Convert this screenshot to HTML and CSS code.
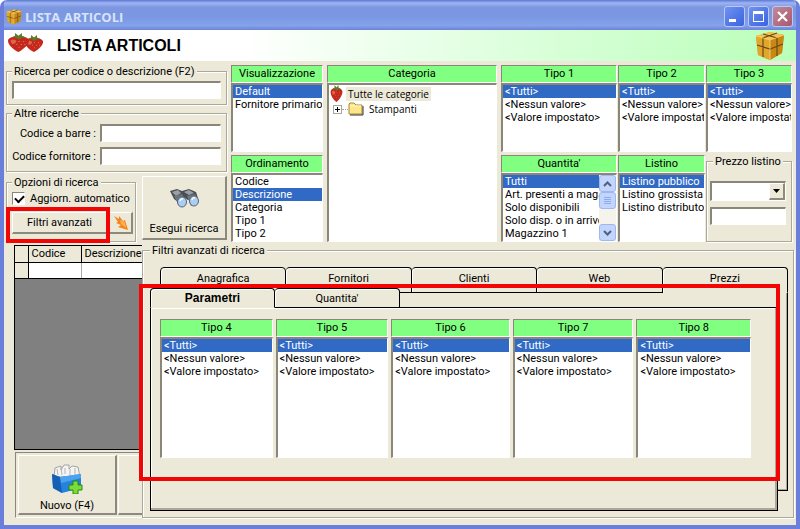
FILE: index.html
```html
<!DOCTYPE html>
<html lang="it">
<head>
    <meta charset="UTF-8">
    <meta name="viewport" content="width=device-width, initial-scale=1">
    <title>Lista articoli</title>
    <link rel="stylesheet" href="styles.css">
</head>
<body>
    <!-- shared icons -->
    <svg class="sprite" width="0" height="0" aria-hidden="true">
        <symbol id="box" viewBox="0 0 30 30">
            <path d="M1 5L15 1L29 4L27 22L15 29L3 24Z" fill="#d9981c"/>
            <path d="M1 5L15 1L29 4L15 9Z" fill="#f1c552"/>
            <path d="M1 5L15 9V29L3 24Z" fill="#e3a62c"/>
            <path d="M15 9L29 4L27 22L15 29Z" fill="#c98714"/>
            <path d="M8 3L22 7V25M22 2L8 7V26M2 14L15 18L28 13" fill="none" stroke="#6b4a12" stroke-width="1.2"/>
            <path d="M1 5L15 9L29 4M15 9V29" fill="none" stroke="#f7d476" stroke-width=".8"/>
        </symbol>
        <symbol id="berry" viewBox="0 0 20 20" preserveAspectRatio="none">
            <path d="M1 7C4 2 16 2 19 7C20 12 13 18 10 20C6 18 0 12 1 7Z" fill="#c5281c"/>
            <path d="M3 8C5 6 8 7 8 9C7 12 5 12 4 11Z" fill="#e2604c"/>
            <path d="M6 9h1M10 9h1M14 9h1M8 12h1M12 12h1M10 15h1M15 12h1" stroke="#e0764f" stroke-width="1"/>
            <path d="M4 5L7 3L7 0L10 3L13 0L13 3L17 5L13 5L10 7L8 5Z" fill="#5f7a28"/>
        </symbol>
    </svg>

    <div class="window">
        <div class="titlebar">
            <svg class="title-icon"><use href="#box"/></svg>
            <span class="title-text">LISTA ARTICOLI</span>
            <button class="win-btn" aria-label="Riduci"><svg viewBox="0 0 19 19"><path d="M4 12h7v3H4z" fill="#fff"/></svg></button>
            <button class="win-btn" aria-label="Ingrandisci"><svg viewBox="0 0 19 19"><path d="M4 4h11v11H4zM5 7v7h9V7z" fill="#fff" fill-rule="evenodd"/></svg></button>
            <button class="win-btn close" aria-label="Chiudi"><svg viewBox="0 0 19 19"><path d="M5 5l9 9M14 5l-9 9" stroke="#fff" stroke-width="2.2"/></svg></button>
        </div>

        <div class="banner">
            <svg class="berries" viewBox="0 0 38 20">
                <use href="#berry" x="17" y="2" width="20" height="17"/>
                <use href="#berry" x="0" y="0" width="23" height="19"/>
            </svg>
            <h1>LISTA ARTICOLI</h1>
            <svg class="banner-box"><use href="#box"/></svg>
        </div>

        <div class="content">
            <div class="top">
                <div class="search">
                    <fieldset class="group code">
                        <legend><label for="q">Ricerca per codice o descrizione (F2)</label></legend>
                        <input class="field" id="q" type="text">
                    </fieldset>
                    <fieldset class="group other">
                        <legend>Altre ricerche</legend>
                        <div class="other-fields">
                            <label for="barcode">Codice a barre :</label>
                            <input class="field" id="barcode" type="text">
                            <label for="supplier">Codice fornitore :</label>
                            <input class="field" id="supplier" type="text">
                        </div>
                    </fieldset>
                    <div class="actions">
                        <fieldset class="group options">
                            <legend>Opzioni di ricerca</legend>
                            <label class="check"><input type="checkbox" checked>Aggiorn. automatico</label>
                            <div class="option-buttons">
                                <button class="btn filters">Filtri avanzati</button>
                                <button class="btn arrow" aria-label="Applica">
                                    <svg width="16" height="16" viewBox="0 0 16 16"><path d="M1 1L6 4L6 1L10 6L12 5L15 15L5 12L8 10L3 8L5 7Z" fill="#f58220"/><path d="M7 5L12 7L13 13L8 9Z" fill="#ffb04a"/></svg>
                                </button>
                                <span class="mark mark-button"></span>
                            </div>
                        </fieldset>
                        <button class="btn run">
                            <svg width="31" height="21" viewBox="0 0 31 21">
                                <path d="M1 3L8 1L13 3L20 1L27 4L29 10L19 12L14 9L9 14L5 11Z" fill="#4b4f55"/>
                                <path d="M3 4L9 2L12 5L7 8ZM15 4L20 2L25 5L20 7Z" fill="#9aa0a8"/>
                                <path d="M5 8L13 6L17 13L10 18ZM18 8L26 6L29 14L22 18Z" fill="#6e747c"/>
                                <ellipse cx="13" cy="14" rx="4.500" ry="5" fill="#a9cdf5" stroke="#5a6470"/>
                                <ellipse cx="25" cy="13" rx="4.500" ry="5" fill="#a9cdf5" stroke="#5a6470"/>
                                <path d="M11 13q1-3 3-2M23 12q1-3 3-2" stroke="#fff" stroke-width="1.500" fill="none"/>
                            </svg>
                            <span>Esegui ricerca</span>
                        </button>
                    </div>
                </div>

                <div class="stack">
                    <div class="list">
                        <label for="view">Visualizzazione</label>
                        <select id="view" size="5"><option selected>Default</option><option>Fornitore primario</option></select>
                    </div>
                    <div class="list">
                        <label for="sort">Ordinamento</label>
                        <select id="sort" size="5"><option>Codice</option><option selected>Descrizione</option><option>Categoria</option><option>Tipo 1</option><option>Tipo 2</option></select>
                    </div>
                </div>

                <div class="list">
                    <span class="list-title">Categoria</span>
                    <ul class="tree">
                        <li class="root"><svg width="13" height="17"><use href="#berry"/></svg><span>Tutte le categorie</span></li>
                        <li class="child">
                            <button class="expand" aria-label="Espandi"><svg width="7" height="7" viewBox="0 0 7 7"><path d="M1 3.500h5M3.500 1v5" stroke="#000"/></svg></button><i></i>
                            <svg width="16" height="14" viewBox="0 0 16 14"><path d="M1 12V2L2 1H6L8 3H14V12Z" fill="#ffe68a" stroke="#a88a2c"/><path d="M2 13H15V4" fill="none" stroke="#333"/><path d="M2 4H13" stroke="#fff8d0"/></svg>
                            <span>Stampanti</span>
                        </li>
                    </ul>
                </div>

                <div class="types">
                    <div class="list">
                        <label for="t1">Tipo 1</label>
                        <select id="t1" size="5"><option selected>&lt;Tutti&gt;</option><option>&lt;Nessun valore&gt;</option><option>&lt;Valore impostato&gt;</option></select>
                    </div>
                    <div class="list">
                        <label for="t2">Tipo 2</label>
                        <select id="t2" size="5"><option selected>&lt;Tutti&gt;</option><option>&lt;Nessun valore&gt;</option><option>&lt;Valore impostato&gt;</option></select>
                    </div>
                    <div class="list">
                        <label for="t3">Tipo 3</label>
                        <select id="t3" size="5"><option selected>&lt;Tutti&gt;</option><option>&lt;Nessun valore&gt;</option><option>&lt;Valore impostato&gt;</option></select>
                    </div>
                    <div class="list">
                        <label for="qty">Quantita'</label>
                        <div class="scrolling">
                            <select id="qty" size="5"><option selected>Tutti</option><option>Art. presenti a magazzino</option><option>Solo disponibili</option><option>Solo disp. o in arrivo</option><option>Magazzino 1</option></select>
                            <div class="scrollbar">
                                <button aria-label="Su"><svg width="9" height="6" viewBox="0 0 9 6"><path d="M1 5l3.500-3.500L8 5" fill="none" stroke="#4d6185" stroke-width="2"/></svg></button>
                                <span class="thumb"><svg width="7" height="8" viewBox="0 0 7 8"><path d="M0 .5h7M0 2.500h7M0 4.500h7M0 6.500h7" stroke="#8caaf0"/></svg></span>
                                <button class="down" aria-label="Giù"><svg width="9" height="6" viewBox="0 0 9 6"><path d="M1 1l3.500 3.500L8 1" fill="none" stroke="#4d6185" stroke-width="2"/></svg></button>
                            </div>
                        </div>
                    </div>
                    <div class="list">
                        <label for="pl">Listino</label>
                        <select id="pl" size="5"><option selected>Listino pubblico</option><option>Listino grossista</option><option>Listino distributore</option></select>
                    </div>
                    <fieldset class="group price">
                        <legend>Prezzo listino</legend>
                        <div class="combo">
                            <select aria-label="Condizione prezzo"><option></option></select>
                            <span class="combo-arrow"><svg width="7" height="4" viewBox="0 0 7 4"><path d="M0 0h7L3.500 4z"/></svg></span>
                        </div>
                        <input class="field" type="text" aria-label="Prezzo">
                    </fieldset>
                </div>
            </div>

            <div class="bottom">
                <div class="results">
                    <div class="grid">
                        <table>
                            <tr><th></th><th>Codice</th><th>Descrizione</th></tr>
                            <tr><td class="row-head"></td><td></td><td></td></tr>
                        </table>
                    </div>
                    <div class="toolbar">
                        <button class="btn new">
                            <svg width="32" height="30" viewBox="0 0 32 30">
                                <path d="M4 4L10 2V6L13 1H18V5L21 2L27 3L29 13H3Z" fill="#f4f4f4" stroke="#a4a4a4"/>
                                <path d="M6 5L7 11M10 4L11 11M14 4V10M19 5V11M24 4V11" stroke="#b5b5b5"/>
                                <path d="M1 10L9 13L30 10V24L11 29L2 24Z" fill="#2583dc"/>
                                <path d="M1 10L9 13L11 29L2 24Z" fill="#1560b4"/>
                                <path d="M9 13L30 10V14L10 19Z" fill="#4ba3f0"/>
                                <path d="M22 17h5v4h4v5h-4v4h-5v-4h-4v-5h4z" fill="#7ddc35" stroke="#258a1d"/>
                            </svg>
                            <span>Nuovo (F4)</span>
                        </button>
                        <button class="btn" aria-label="Modifica"></button>
                    </div>
                </div>

                <fieldset class="group advanced">
                    <legend>Filtri avanzati di ricerca</legend>
                    <div class="tabset">
                        <div class="back">
                            <div class="tabs">
                                <button class="tab">Anagrafica</button>
                                <button class="tab">Fornitori</button>
                                <button class="tab">Clienti</button>
                                <button class="tab">Web</button>
                                <button class="tab open">Prezzi</button>
                            </div>
                            <div class="page"></div>
                        </div>
                        <div class="front">
                            <div class="tabs">
                                <button class="tab open active">Parametri</button>
                                <button class="tab">Quantita'</button>
                            </div>
                            <div class="page">
                                <div class="list">
                                    <label for="t4">Tipo 4</label>
                                    <select id="t4" size="5"><option selected>&lt;Tutti&gt;</option><option>&lt;Nessun valore&gt;</option><option>&lt;Valore impostato&gt;</option></select>
                                </div>
                                <div class="list">
                                    <label for="t5">Tipo 5</label>
                                    <select id="t5" size="5"><option selected>&lt;Tutti&gt;</option><option>&lt;Nessun valore&gt;</option><option>&lt;Valore impostato&gt;</option></select>
                                </div>
                                <div class="list">
                                    <label for="t6">Tipo 6</label>
                                    <select id="t6" size="5"><option selected>&lt;Tutti&gt;</option><option>&lt;Nessun valore&gt;</option><option>&lt;Valore impostato&gt;</option></select>
                                </div>
                                <div class="list">
                                    <label for="t7">Tipo 7</label>
                                    <select id="t7" size="5"><option selected>&lt;Tutti&gt;</option><option>&lt;Nessun valore&gt;</option><option>&lt;Valore impostato&gt;</option></select>
                                </div>
                                <div class="list">
                                    <label for="t8">Tipo 8</label>
                                    <select id="t8" size="5"><option selected>&lt;Tutti&gt;</option><option>&lt;Nessun valore&gt;</option><option>&lt;Valore impostato&gt;</option></select>
                                </div>
                            </div>
                        </div>
                        <span class="mark mark-tabs"></span>
                    </div>
                </fieldset>
            </div>
        </div>
    </div>
</body>
</html>
```
FILE: styles.css
```css
:root {
    --face: #ece9d8;
    --shadow: #aca899;
    --dark: #8a877a;
    --select: #316ac5;
    --green: #80ff80;
    --frame: #6a7fdb;
    --mark: #f20505;
}
* {
    box-sizing: border-box;
}
body {
    margin: 0;
    background: #fff;
    color: #000;
    font: 11px/13px Roboto, "Liberation Sans", sans-serif;
}
button, input, select {
    font: inherit;
    color: inherit;
    margin: 0;
}
.sprite {
    position: absolute;
}
.window {
    display: flex;
    flex-direction: column;
    min-height: 100vh;
    background: var(--face);
    border: solid var(--frame);
    border-width: 0 4px 4px;
    border-radius: 7px 7px 0 0;
    overflow: hidden;
}

/* title bar */
.titlebar {
    display: flex;
    align-items: center;
    gap: 2px;
    height: 30px;
    padding: 3px 3px 0 2px;
    background: linear-gradient(#5d78d6, #9db4f2 10%, #7d96e0 25%, #7b98e4 60%, #85a3ea 85%, #6c82d8);
}
.title-icon {
    width: 16px;
    height: 16px;
}
.title-text {
    flex: 1;
    padding-left: 1px;
    font: bold 13px/16px "Open Sans", "Noto Sans", sans-serif;
    color: #d8e4f8;
}
.win-btn {
    width: 21px;
    height: 21px;
    margin-left: 1px;
    padding: 0;
    border: 1px solid #b9c8f5;
    border-radius: 3px;
    background: linear-gradient(135deg, #6f92f0, #3a63e0);
}
.win-btn.close {
    background: linear-gradient(135deg, #c08a9c, #a8586c);
}
.win-btn svg {
    display: block;
}

/* banner */
.banner {
    display: flex;
    align-items: center;
    height: 31px;
    padding: 0 11px 0 3px;
    background: linear-gradient(90deg, #fff 30%, #b9ffb9);
}
.berries {
    width: 38px;
    height: 20px;
    margin-bottom: 5px;
}
h1 {
    flex: 1;
    margin: 0 0 0 12px;
    font: bold 16px/20px "Liberation Sans", Arial, sans-serif;
}
.banner-box {
    width: 30px;
    height: 30px;
}

/* groups, fields and buttons */
.content {
    flex: 1;
    display: flex;
    flex-direction: column;
    gap: 2px;
    padding: 4px 2px 7px;
}
.group {
    min-width: 0;
    margin: 0;
    padding: 0 8px;
    border: 1px solid var(--shadow);
    box-shadow: 1px 1px 0 #fff, inset 1px 1px 0 #fff;
}
.group legend {
    padding: 0 2px;
    background: var(--face);
    white-space: nowrap;
}
.field {
    display: block;
    width: 100%;
    height: 18px;
    padding: 0 2px;
    background: #fff;
    border: solid;
    border-width: 2px 1px 1px 2px;
    border-color: var(--dark) #fff #fff var(--dark);
    border-radius: 0;
}
.btn {
    padding: 0;
    background: var(--face);
    border: solid;
    border-width: 1px 2px 2px 1px;
    border-color: #fff #8c8a7c #8c8a7c #fff;
    border-radius: 0;
}

/* upper area */
.top {
    display: grid;
    grid-template-columns: 221px 92px minmax(120px, 1fr) 291px;
    gap: 4px;
    height: 177px;
    margin-right: 2px;
}
.search {
    display: flex;
    flex-direction: column;
    gap: 2px;
}
.code {
    height: 40px;
    padding: 3px 5px 0;
}
.other {
    height: 65px;
    padding: 4px 5px 0;
}
.other-fields {
    display: grid;
    grid-template-columns: 88px 1fr;
    align-items: center;
    row-gap: 5px;
}
.other-fields label {
    padding-right: 4px;
    text-align: right;
    white-space: nowrap;
}
.actions {
    display: flex;
    gap: 6px;
    flex: 1;
}
.options {
    width: 130px;
    margin-top: 2px;
    padding: 3px 2px 0 5px;
}
.check {
    display: flex;
    align-items: center;
    gap: 5px;
    white-space: nowrap;
}
.check input {
    appearance: none;
    width: 13px;
    height: 13px;
    border: 1px solid;
    border-color: var(--dark) #fff #fff var(--dark);
    background: #fff;
}
.check input:checked::after {
    content: "";
    display: block;
    width: 7px;
    height: 4px;
    margin: 2px;
    border: solid #000;
    border-width: 0 0 2px 2px;
    transform: rotate(-45deg);
}
.option-buttons {
    position: relative;
    display: flex;
    margin-top: 7px;
}
.filters {
    width: 96px;
    height: 22px;
}
.arrow {
    flex: 1;
    height: 22px;
    padding-left: 4px;
}
.arrow svg {
    display: block;
}
.run {
    flex: 1;
    display: flex;
    flex-direction: column;
    align-items: center;
    justify-content: flex-end;
    gap: 13px;
    margin: 2px 0;
    padding-bottom: 3px;
    white-space: nowrap;
}

/* list boxes */
.stack {
    display: grid;
    grid-template-rows: 1fr 1fr;
    gap: 3px;
}
.list {
    display: flex;
    flex-direction: column;
    min-width: 0;
    min-height: 0;
}
.list > label,
.list-title {
    height: 18px;
    line-height: 16px;
    text-align: center;
    background: var(--green);
    border: 1px solid;
    border-color: var(--dark) #fff #fff var(--dark);
}
.list select,
.tree,
.scrolling {
    flex: 1;
    width: 100%;
    min-height: 0;
    margin: 0;
    padding: 0;
    background: #fff;
    border: solid;
    border-width: 2px 1px 1px 2px;
    border-color: var(--dark) #fff #fff var(--dark);
    border-radius: 0;
    overflow: hidden;
    outline: 0;
}
.list option {
    height: 13px;
    min-height: 13px;
    padding: 0 2px;
    line-height: 13px;
}
.list option:checked {
    background: linear-gradient(var(--select), var(--select));
    -webkit-text-fill-color: #fff;
}
.tree {
    list-style: none;
    font: 10px/14px "Open Sans", "Liberation Sans", sans-serif;
}
.tree li {
    display: flex;
    align-items: center;
}
.root {
    gap: 3px;
    padding-left: 1px;
}
.root span {
    padding: 0 2px;
    background: var(--face);
}
.child {
    padding-left: 4px;
}
.expand {
    display: grid;
    width: 9px;
    height: 9px;
    padding: 0;
    border: 1px solid var(--shadow);
    background: #fff;
}
.child i {
    width: 6px;
    border-top: 1px dotted var(--shadow);
}
.child span {
    padding-left: 5px;
}
.types {
    display: grid;
    grid-template-columns: 116px 87px 86px;
    grid-template-rows: 1fr 1fr;
    gap: 3px 1px;
}
.scrolling {
    display: flex;
}
.scrolling select {
    border: 0;
}
.scrollbar {
    flex: none;
    display: flex;
    flex-direction: column;
    width: 17px;
    background: #f5f4ec;
}
.scrollbar button,
.thumb {
    display: grid;
    place-items: center;
    height: 17px;
    padding: 0;
    border: 1px solid #9db6f5;
    border-radius: 3px;
    background: #c4d5fc;
}
.scrollbar .down {
    margin-top: auto;
}
.price {
    padding: 13px 5px 0 3px;
}
.price legend {
    margin-left: 3px;
}
.combo {
    position: relative;
    margin-bottom: 6px;
}
.combo select {
    appearance: none;
    display: block;
    width: 100%;
    height: 20px;
    background: #fff;
    border: solid;
    border-width: 2px 1px 1px 2px;
    border-color: var(--dark) #fff #fff var(--dark);
    border-radius: 0;
}
.combo-arrow {
    position: absolute;
    top: 2px;
    right: 1px;
    bottom: 1px;
    display: grid;
    place-items: center;
    width: 16px;
    background: var(--face);
    border: solid;
    border-width: 1px 2px 2px 1px;
    border-color: #fff #8c8a7c #8c8a7c #fff;
    pointer-events: none;
}

/* results and advanced filters */
.bottom {
    flex: 1;
    display: flex;
    padding-left: 8px;
}
.results {
    display: flex;
    flex-direction: column;
    gap: 2px;
    width: 128px;
    padding-top: 1px;
    overflow: hidden;
}
.grid {
    flex: 1;
    background: #808080;
    border: 1px solid #000;
    border-right: 0;
    overflow: hidden;
}
.grid table {
    width: 160px;
    table-layout: fixed;
    border-collapse: collapse;
}
.grid th {
    height: 16px;
    padding: 0 3px;
    text-align: left;
    font-weight: normal;
    background: var(--face);
    border: solid #000;
    border-width: 0 1px 1px 0;
}
.grid th:first-child {
    width: 13px;
}
.grid th:nth-child(2) {
    width: 53px;
}
.grid td {
    height: 16px;
    padding: 0;
    background: #fff;
    border: solid;
    border-width: 0 1px 1px 0;
    border-color: var(--shadow) var(--shadow) #000;
}
.grid .row-head {
    background: var(--face);
    border-right-color: #000;
}
.toolbar {
    display: flex;
    gap: 1px;
    width: 300px;
    margin-left: 1px;
    padding: 2px;
    border: 1px solid;
    border-color: var(--dark) #fff #fff var(--dark);
}
.toolbar .btn {
    width: 99px;
    height: 60px;
}
.new {
    display: flex;
    flex-direction: column;
    align-items: center;
    justify-content: flex-end;
    gap: 5px;
    padding-bottom: 1px;
}
.advanced {
    flex: 1;
    display: flex;
    padding: 10px 5px 6px 7px;
}
.tabset {
    position: relative;
    display: grid;
    width: 100%;
    height: 100%;
}
.back,
.front {
    grid-area: 1 / 1;
    display: flex;
    flex-direction: column;
}
.back {
    margin: 0 0 20px 10px;
}
.front {
    margin: 21px 10px 0 0;
}
.tabs {
    display: flex;
}
.tab {
    flex: 1;
    padding: 0;
    background: var(--face);
    border: solid #000;
    border-width: 1px 1px 1px 0;
    border-radius: 4px 4px 0 0;
    box-shadow: inset 1px 1px 0 #fff;
}
.back .tab {
    height: 26px;
    padding-bottom: 3px;
}
.front .tab {
    flex: none;
    width: 125px;
    height: 20px;
}
.front .tabs {
    position: relative;
    z-index: 1;
}
.tab:first-child {
    border-left: 1px solid #000;
}
.tab.open {
    border-bottom-color: var(--face);
}
.tab.active {
    font: bold 12px/13px "Liberation Sans", Arial, sans-serif;
}
.page {
    flex: 1;
    background: var(--face);
    border: 1px solid #000;
    box-shadow: inset -2px -2px 0 var(--shadow), inset 1px 1px 0 #fff;
}
.back .page {
    border-top: 0;
    box-shadow: inset -1px -1px 0 var(--shadow);
}
.front .page {
    display: grid;
    grid-template-columns: 115fr 115fr 121fr 123fr 117fr;
    gap: 0 1px;
    margin-top: -1px;
    padding: 11px 24px 52px 9px;
}
.front .list {
    margin-right: 2px;
}

/* red highlights */
.mark {
    position: absolute;
    z-index: 2;
    border: 4px solid var(--mark);
    pointer-events: none;
}
.mark-button {
    inset: -5px 23px -9px -6px;
}
.mark-tabs {
    inset: 17px 8px 30px -11px;
}
```
